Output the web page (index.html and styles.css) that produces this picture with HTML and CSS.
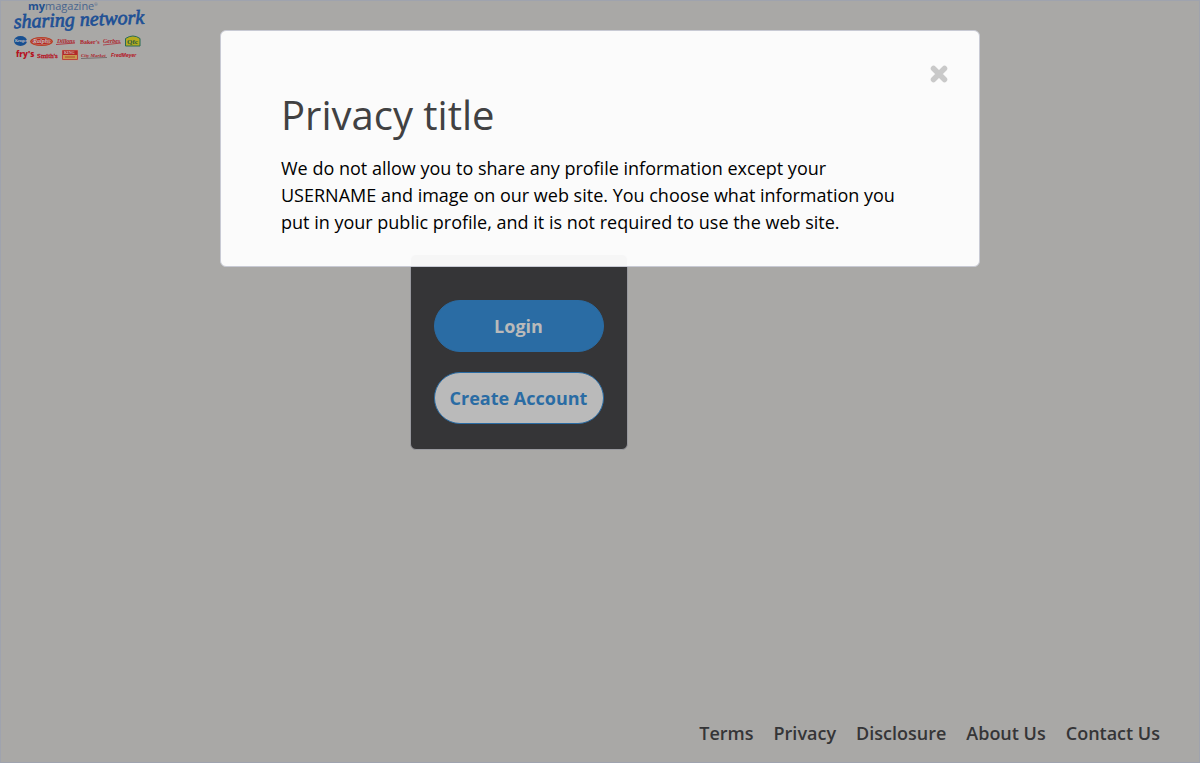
FILE: index.html
```html
<!DOCTYPE html>
<html lang="en">
<head>
<meta charset="utf-8">
<meta name="viewport" content="width=device-width, initial-scale=1">
<title>Privacy</title>
<link rel="stylesheet" href="styles.css">
</head>
<body>
<div class="page">
  <header class="header">
    <a class="logo" href="#" aria-label="mymagazine sharing network">
      <svg class="logo-art" viewBox="0 0 130 62" role="img">
        <text class="brand-top" x="16" y="9"><tspan class="brand-my">my</tspan>magazine<tspan class="brand-mark" dy="-4">®</tspan></text>
        <g transform="rotate(-2 65 26)">
          <text class="brand-script" x="2" y="25">sharing network</text>
        </g>
        <ellipse cx="8.500" cy="40" rx="6.500" ry="5" fill="#174f91"/>
        <text class="store kroger" x="3" y="41">Kroger</text>
        <ellipse cx="29.500" cy="40.500" rx="11.500" ry="4.500" fill="#b73a22"/>
        <ellipse cx="29.500" cy="40.500" rx="9.500" ry="3.200" fill="#b72822" stroke="#c79b8d" stroke-width=".5"/>
        <text class="store ralphs" x="21" y="42">Ralphs</text>
        <text class="store script" x="45" y="42">Dillons</text>
        <path d="M44 43.500 63 42" stroke="#ad1f2d" stroke-width=".8"/>
        <text class="store serif" x="68" y="43">Baker's</text>
        <text class="store script" x="91" y="42">Gerbes</text>
        <path d="M91 44 109 42" stroke="#ad1f2d" stroke-width=".7"/>
        <path d="M113.500 37.500Q121 32.500 128 37.500V45H113.500Z" fill="#b5aa1e" stroke="#286b55" stroke-width="1"/>
        <text class="store qfc" x="115" y="43">Qfc</text>
        <text class="store frys" x="4" y="56">fry's</text>
        <text class="store smiths" x="25" y="57">Smith's</text>
        <rect x="50" y="49" width="16" height="10" fill="#b22929" stroke="#d09a80" stroke-width=".5"/>
        <text class="store king" x="52" y="53">KING</text>
        <rect x="51" y="54" width="14" height="4" fill="#c9974d"/>
        <path d="M53 56H63" stroke="#a84d28"/>
        <text class="store city" x="69" y="56">City Market</text>
        <path d="M69 57.500 95 56.500" stroke="#544747" stroke-width=".6"/>
        <text class="store fred" x="99" y="56">FredMeyer</text>
      </svg>
    </a>
  </header>
  <main class="main">
    <section class="card" aria-label="Account">
      <button class="button button-primary" type="button">Login</button>
      <button class="button button-outline" type="button">Create Account</button>
    </section>
  </main>
  <footer class="footer">
    <a href="#">Terms</a>
    <a href="#">Privacy</a>
    <a href="#">Disclosure</a>
    <a href="#">About Us</a>
    <a href="#">Contact Us</a>
  </footer>
</div>
<div class="modal" role="dialog" aria-labelledby="modal-title">
  <button class="close" type="button" aria-label="Close">
    <svg width="18" height="18" viewBox="0 0 18 18"><path d="M3.500 3.500 14.500 14.500M14.500 3.500 3.500 14.500" stroke="#c9c9c9" stroke-width="5.500" stroke-linecap="round"/></svg>
  </button>
  <h1 class="modal-title" id="modal-title">Privacy title</h1>
  <p class="modal-text">We do not allow you to share any profile information except your USERNAME and image on our web site. You choose what information you put in your public profile, and it is not required to use the web site.</p>
</div>
</body>
</html>
```
FILE: styles.css
```css
* { box-sizing: border-box; }
body {
  margin: 0;
  font-family: "Open Sans", sans-serif;
  font-size: 18px;
  line-height: 27px;
  color: #000;
}
.page {
  min-height: 100vh;
  display: flex;
  flex-direction: column;
  background: #a9a8a6;
  border: 1px solid #9fa3ae;
}
.header { display: flex; padding-left: 11px; }
.logo { display: block; }
.logo-art { display: block; width: 130px; height: 62px; overflow: visible; }
.brand-top { font-size: 11px; fill: #48658e; }
.brand-my { font-weight: 700; fill: #22508f; }
.brand-mark { font-size: 4px; }
.brand-script {
  font-family: "Liberation Serif", serif;
  font-size: 20px;
  font-style: italic;
  fill: #1e5095;
  stroke: #1e5095;
  stroke-width: 0.7px;
}
.store { font-family: "Liberation Serif", serif; font-size: 7px; font-weight: 700; fill: #b5121f; }
.kroger { font-size: 4px; fill: #c5c0c0; }
.ralphs { font-size: 6px; font-style: italic; fill: #c5c0c0; }
.script { font-size: 6px; font-style: italic; fill: #ad1f2d; }
.serif { font-size: 6px; fill: #ad1f2d; }
.qfc { fill: #275b43; }
.frys { font-family: "Open Sans", sans-serif; font-size: 8px; font-weight: 800; }
.smiths { font-size: 7px; font-weight: 400; stroke: #b5121f; stroke-width: 0.3px; }
.king { font-size: 4px; fill: #d0b9aa; }
.city { font-size: 5px; font-style: italic; fill: #a92932; }
.fred { font-family: "Liberation Sans", sans-serif; font-size: 5px; font-style: italic; }
.main { flex: 1; padding: 191px 20px 40px 34.1%; }
.card {
  width: 218px;
  display: flex;
  flex-direction: column;
  gap: 20px;
  padding: 45px 23px 25px;
  background: #353537;
  border: 1px solid #98999e;
  border-radius: 6px;
}
.button {
  height: 52px;
  padding: 0;
  border: 1px solid #2a6ca4;
  border-radius: 26px;
  font: inherit;
  font-weight: 700;
  cursor: pointer;
}
.button-primary { background: #2a6ca4; color: #bababa; }
.button-outline { padding-top: 1px; background: #bababa; color: #2a6ca4; }
.footer {
  display: flex;
  flex-wrap: wrap;
  justify-content: flex-end;
  gap: 20px;
  padding: 0 39px 15px;
}
.footer a { color: #353537; font-weight: 600; text-decoration: none; }
.modal {
  position: absolute;
  top: 30px;
  left: 0;
  right: 0;
  width: 760px;
  max-width: calc(100% - 40px);
  margin: 0 auto;
  padding: 60px 60px 30px;
  background: rgba(255, 255, 255, 0.955);
  border: 1px solid #c8cad4;
  border-radius: 6px;
}
.close {
  position: absolute;
  top: 34px;
  right: 31px;
  padding: 0;
  border: 0;
  background: none;
  line-height: 0;
  cursor: pointer;
}
.modal-title {
  margin: 0 0 16px;
  font-size: 40px;
  font-weight: 400;
  line-height: 48px;
  color: #414142;
}
.modal-text { margin: 0; }
```
